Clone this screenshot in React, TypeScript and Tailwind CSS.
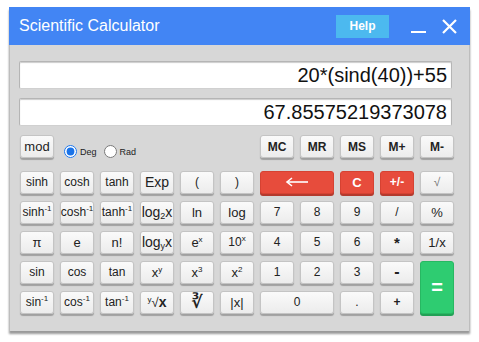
import React from "react";

type Key = {
  label: React.ReactNode;
  span?: string;
  kind?: "gray" | "red" | "green";
  bold?: boolean;
  size?: string;
};

const sup = (base: string, s: string) => (
  <span>
    {base}
    <sup className="text-[8px] -top-[5px]">{s}</sup>
  </span>
);

const Arrow = () => (
  <svg width="24" height="10" viewBox="0 0 24 10">
    <path d="M2 5 H23" stroke="white" strokeWidth="1.6" />
    <path d="M7 1 L2 5 L7 9" stroke="white" strokeWidth="1.6" fill="none" />
  </svg>
);

// grid rows under the memory row
const keys: Key[] = [
  { label: "sinh" },
  { label: "cosh" },
  { label: "tanh" },
  { label: "Exp", size: "text-[14px]" },
  { label: "(" },
  { label: ")" },
  { label: <Arrow />, span: "col-span-2", kind: "red" },
  { label: "C", kind: "red", bold: true, size: "text-[13px]" },
  { label: "+/-", kind: "red", bold: true },
  { label: "√", size: "text-[12px] text-[#777]" },

  { label: sup("sinh", "-1") },
  { label: sup("cosh", "-1") },
  { label: sup("tanh", "-1") },
  {
    label: (
      <span>
        log<sub className="text-[9px]">2</sub>x
      </span>
    ),
    size: "text-[14px]",
  },
  { label: "ln", size: "text-[13px]" },
  { label: "log", size: "text-[13px]" },
  { label: "7" },
  { label: "8" },
  { label: "9" },
  { label: "/" },
  { label: "%", size: "text-[13px]" },

  { label: "π", size: "text-[13px]" },
  { label: "e", size: "text-[13px]" },
  { label: "n!", size: "text-[13px]" },
  {
    label: (
      <span>
        log<sub className="text-[9px]">y</sub>x
      </span>
    ),
    size: "text-[14px]",
  },
  { label: sup("e", "x"), size: "text-[13px]" },
  { label: sup("10", "x") },
  { label: "4" },
  { label: "5" },
  { label: "6" },
  { label: "*", bold: true, size: "text-[15px]" },
  { label: "1/x", size: "text-[13px]" },

  { label: "sin" },
  { label: "cos" },
  { label: "tan" },
  { label: sup("x", "y"), size: "text-[13px]" },
  { label: sup("x", "3"), size: "text-[13px]" },
  { label: sup("x", "2"), size: "text-[13px]" },
  { label: "1" },
  { label: "2" },
  { label: "3" },
  { label: "-", bold: true, size: "text-[16px]" },
  { label: "=", kind: "green", bold: true, size: "text-[20px]", span: "row-span-2" },

  { label: sup("sin", "-1") },
  { label: sup("cos", "-1") },
  { label: sup("tan", "-1") },
  {
    label: (
      <span>
        <sup className="text-[8px] -top-[5px]">y</sup>
        √<span className="font-bold text-[14px]">x</span>
      </span>
    ),
    size: "text-[13px]",
  },
  {
    label: (
      <span
        className="text-[17px] font-bold"
        style={{ fontFamily: '"DejaVu Sans", sans-serif' }}
      >
        ∛
      </span>
    ),
  },
  { label: "|x|", size: "text-[13px]" },
  { label: "0", span: "col-span-2" },
  { label: "." },
  { label: "+", bold: true },
];

function Btn({ k }: { k: Key }) {
  const color =
    k.kind === "red"
      ? "bg-[#e74c3c] border-[#d64232] text-white shadow-[0_2px_0_#b33a2d]"
      : k.kind === "green"
        ? "bg-[#2ecc71] border-[#27b862] text-white shadow-[0_2px_0_#22a055]"
        : "bg-gradient-to-b from-[#fafafa] to-[#ececec] border-[#c4c4c4] text-[#222] shadow-[0_2px_1px_#a0a0a0]";
  return (
    <button
      className={`flex items-center justify-center rounded-[3px] border leading-none ${color} ${k.span ?? ""} ${k.bold ? "font-bold" : ""} ${k.size ?? "text-[12px]"}`}
    >
      {k.label}
    </button>
  );
}

const memKey = (t: string) => (
  <button
    key={t}
    className="flex h-[23px] w-[34px] items-center justify-center rounded-[3px] border border-[#c4c4c4] bg-gradient-to-b from-[#fafafa] to-[#ececec] text-[12px] font-bold text-[#222] shadow-[0_2px_1px_#a0a0a0]"
  >
    {t}
  </button>
);

export default function App() {
  return (
    <div
      className="h-[342px] w-[479px] bg-white pl-[9px] pt-[7px]"
      style={{ fontFamily: '"Liberation Sans", Arial, sans-serif' }}
    >
      <div className="w-[461px] shadow-[0_3px_2px_#9a9a9a]">
        {/* Title bar */}
        <div className="flex h-[38px] items-center bg-[#4285f4] pl-[10px] pr-[13px]">
          <span className="text-[16px] text-white">Scientific Calculator</span>
          <button className="ml-auto flex h-[23px] w-[53px] items-center justify-center bg-[#4cb9ef] text-[12px] font-bold text-white">
            Help
          </button>
          <span className="ml-[22px] mt-[12px] h-[2px] w-[15px] bg-white" />
          <svg className="ml-[16px]" width="15" height="15" viewBox="0 0 15 15">
            <path d="M1 1 L14 14 M14 1 L1 14" stroke="white" strokeWidth="2.2" />
          </svg>
        </div>

        {/* Body */}
        <div className="h-[286px] border-x border-[#bdbdbd] bg-[#d7d7d7] pl-[9px] pt-[16px]">
          <div className="flex flex-col gap-[9px]">
            <div className="flex h-[28px] w-[433px] items-center justify-end rounded-[2px] border border-[#b5b5b5] border-b-[#d0d0d0] bg-white pr-[4px] text-[20px] text-[#111] shadow-[inset_0_1px_1px_#ccc]">
              20*(sind(40))+55
            </div>
            <div className="flex h-[28px] w-[433px] items-center justify-end rounded-[2px] border border-[#b5b5b5] border-b-[#d0d0d0] bg-white pr-[4px] text-[20px] text-[#111] shadow-[inset_0_1px_1px_#ccc]">
              67.85575219373078
            </div>
          </div>

          {/* Memory row */}
          <div className="ml-[1px] mt-[9px] flex w-[434px] items-start">
            <button className="flex h-[23px] w-[34px] items-center justify-center rounded-[3px] border border-[#c4c4c4] bg-gradient-to-b from-[#fafafa] to-[#ececec] text-[13px] text-[#222] shadow-[0_2px_1px_#a0a0a0]">
              mod
            </button>
            <label className="ml-[10px] mt-[8px] flex items-center text-[9px] text-[#222]">
              <input
                type="radio"
                name="unit"
                defaultChecked
                className="m-0 h-[13px] w-[13px] accent-[#1a73e8]"
              />
              <span className="ml-[3px] mt-[3px]">Deg</span>
            </label>
            <label className="ml-[7px] mt-[8px] flex items-center text-[9px] text-[#222]">
              <input type="radio" name="unit" className="m-0 h-[13px] w-[13px]" />
              <span className="ml-[3px] mt-[3px]">Rad</span>
            </label>
            <div className="ml-auto flex gap-[6px]">
              {["MC", "MR", "MS", "M+", "M-"].map(memKey)}
            </div>
          </div>

          {/* Keypad */}
          <div className="ml-[1px] mt-[11px] grid w-[434px] grid-cols-[repeat(11,34px)] auto-rows-[23px] gap-x-[6px] gap-y-[7px]">
            {keys.map((k, i) => (
              <Btn key={i} k={k} />
            ))}
          </div>
        </div>
      </div>
    </div>
  );
}
